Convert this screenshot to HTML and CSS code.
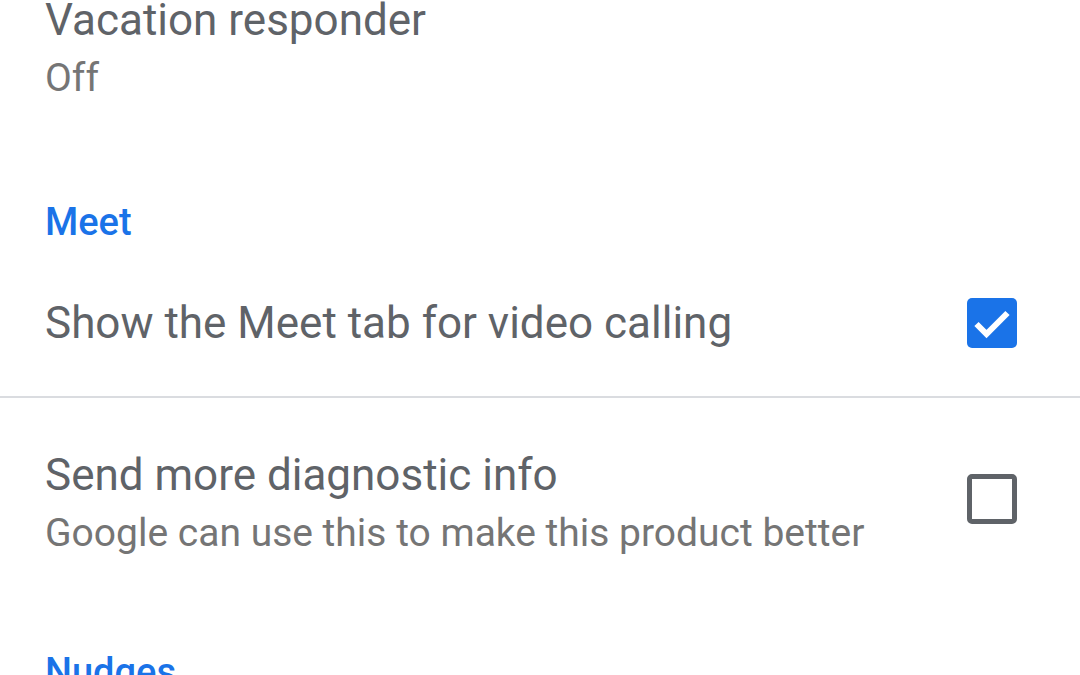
FILE: index.html
```html
<!DOCTYPE html>
<html lang="en">
<head>
  <meta charset="UTF-8">
  <meta name="viewport" content="width=device-width, initial-scale=1.0">
  <title>Settings</title>
  <link rel="stylesheet" href="styles.css">
</head>
<body>
  <div id="settings-list">
    <div class="pref">
      <div class="pref-text">
        <div class="pref-title">Vacation responder</div>
        <div class="pref-summary">Off</div>
      </div>
    </div>

    <div class="category">Meet</div>
    <div class="pref pref-single divider">
      <div class="pref-text">
        <div class="pref-title">Show the Meet tab for video calling</div>
      </div>
      <div class="checkbox checked">
        <svg viewBox="0 0 50 50" width="50" height="50">
          <path d="M9.5 26 L19.5 36 L40.5 15" fill="none" stroke="#fff" stroke-width="6"/>
        </svg>
      </div>
    </div>

    <div class="pref pref-double">
      <div class="pref-text">
        <div class="pref-title">Send more diagnostic info</div>
        <div class="pref-summary">Google can use this to make this product better</div>
      </div>
      <div class="checkbox"></div>
    </div>

    <div class="category">Nudges</div>
  </div>
</body>
</html>
```

FILE: styles.css
```css
body {
  font-family: Roboto, 'Noto Sans', sans-serif;
  margin: 0;
  padding: 0;
  background: #ffffff;
  color: #5f6368;
  overflow: hidden;
}

#settings-list {
  margin-top: -8px;
}

.pref {
  display: flex;
  align-items: center;
  padding: 0 63px 0 45px;
}

.pref-text {
  flex: 1;
}

.pref-title {
  font-size: 44px;
  line-height: 56px;
  color: #5f6368;
}

.pref-summary {
  font-size: 39px;
  line-height: 52px;
  margin-top: 4px;
  color: #757575;
}

.category {
  font-size: 38px;
  font-weight: 500;
  line-height: 48px;
  color: #1a73e8;
  padding-left: 45px;
  margin-top: 94px;
}

.pref-single {
  padding-top: 49px;
  padding-bottom: 45px;
}

.divider {
  border-bottom: 2px solid #dadce0;
}

.pref-double {
  padding-top: 49px;
  padding-bottom: 45px;
}

.pref-double + .category {
  margin-top: 44px;
}

.checkbox {
  width: 50px;
  height: 50px;
  box-sizing: border-box;
  border: 5px solid #5f6368;
  border-radius: 5px;
}

.pref-double .checkbox {
  margin-bottom: 9px;
}

.checkbox.checked {
  border: none;
  background: #1a73e8;
}

.checkbox svg {
  display: block;
}
```
